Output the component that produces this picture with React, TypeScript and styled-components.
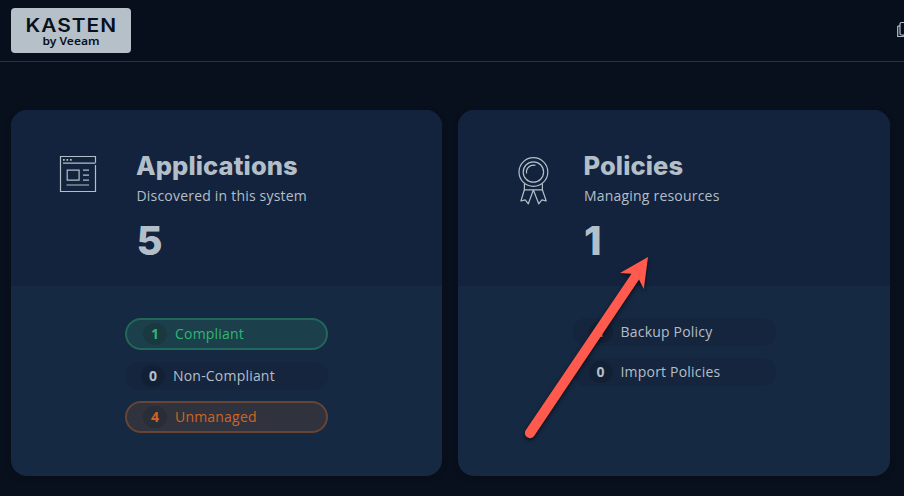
import React from "react";
import styled, { createGlobalStyle, css } from "styled-components";

const GlobalStyle = createGlobalStyle`
  * { box-sizing: border-box; }
  html, body { margin: 0; background: #09101d; overflow: hidden; }
  body { font-family: "Open Sans", "Noto Sans", sans-serif; color: #b3bfc8; }
`;

const Page = styled.div`
  position: relative;
  width: 904px;
  height: 496px;
  overflow: hidden;
  background: #09101d;
`;

const Header = styled.header`
  display: flex;
  justify-content: space-between;
  height: 62px;
  padding: 8px 0 0 11px;
  border-bottom: 1px solid #24354a;
  background: #070f1c;
`;

const Logo = styled.svg`
  display: block;
  width: 120px;
  height: 45px;
  border-radius: 4px;
  background: #b5c0c9;
`;

const DocsIcon = styled.svg`
  width: 8px;
  height: 18px;
  margin-top: 13px;
`;

const Cards = styled.main`
  display: grid;
  grid-template-columns: 431px 432px;
  column-gap: 16px;
  padding: 48px 0 0 11px;
`;

const Card = styled.section`
  height: 365.5px;
  border-radius: 16px;
  overflow: hidden;
  background: #162942;
  box-shadow: 0 2px 6px rgba(0, 0, 0, 0.2);
`;

const Summary = styled.div<{ $inset: number }>`
  display: flex;
  height: 176px;
  padding-left: ${(p) => p.$inset}px;
  background: #14233d;
`;

const IconSlot = styled.div<{ $width: number }>`
  width: ${(p) => p.$width}px;
  padding-top: 45px;
  flex: none;
  svg { display: block; }
`;

const Details = styled.div`
  padding-top: 39px;
`;

const Title = styled.h2`
  margin: 0 0 0 -0.5px;
  font: 800 25.5px/34px Inter, sans-serif;
  letter-spacing: 0.1px;
  white-space: nowrap;
`;

const Subtitle = styled.p`
  margin: 3px 0 0;
  font-size: 14px;
  line-height: 20px;
  letter-spacing: 0.2px;
`;

const Total = styled.div`
  margin: 11px 0 0;
  font: 800 40px/48px Inter, sans-serif;
`;

const StatusList = styled.div<{ $inset: number }>`
  display: flex;
  flex-direction: column;
  gap: 11.6px;
  width: 203px;
  margin: 32px 0 0 ${(p) => p.$inset}px;
`;

type Tone = "neutral" | "good" | "warn";

const tones = {
  neutral: css`
    height: 28px;
    background: #15253e;
  `,
  good: css`
    height: 32px;
    color: #2fb673;
    border: 2px solid #23665a;
    background: #1b404b;
  `,
  warn: css`
    height: 32px;
    color: #d0651f;
    border: 2px solid #674433;
    background: #30323e;
  `,
};

const Pill = styled.div<{ $tone: Tone }>`
  display: flex;
  align-items: center;
  gap: 8px;
  padding-left: 16px;
  border-radius: 16px;
  font-size: 14px;
  line-height: 20px;
  letter-spacing: 0.2px;
  white-space: nowrap;
  ${(p) => tones[p.$tone]}
`;

const countColors = { neutral: "#122036", good: "#193840", warn: "#292d38" };

const Count = styled.span<{ $tone: Tone }>`
  display: flex;
  align-items: center;
  justify-content: center;
  width: 24px;
  height: 22px;
  border-radius: 50%;
  font-weight: 700;
  letter-spacing: 0;
  background: ${(p) => countColors[p.$tone]};
`;

const Pointer = styled.svg`
  position: absolute;
  left: 510px;
  top: 240px;
  filter: drop-shadow(0 2px 2px rgba(0, 0, 0, 0.6));
`;

function Status({ count, label, tone = "neutral" }: { count: number; label: string; tone?: Tone }) {
  return (
    <Pill $tone={tone}>
      <Count $tone={tone}>{count}</Count>
      {label}
    </Pill>
  );
}

function BrowserIcon() {
  return (
    <svg width="40" height="40" viewBox="0 0 40 40" fill="none" stroke="#b3bfc8" strokeWidth="1.2">
      <path d="M36.5 7.5V1.5H1.5v35h35V10M4 8.2h32.5" />
      <path d="M4 4.8h1.7M7.5 4.8h1.7M11 4.8h1.7" strokeWidth="1.7" />
      <path d="M8.2 15.2h11.9v10H8.2zM24 15.2h6M24 20.2h6M24 25.2h6M7.5 30h22.5" />
    </svg>
  );
}

function RibbonIcon() {
  return (
    <svg width="40" height="54" viewBox="0.6 0 40 54" fill="none" stroke="#b3bfc8" strokeWidth="1.2">
      <circle cx="20" cy="17" r="14.4" />
      <circle cx="20" cy="17" r="10.2" />
      <path d="M13.2 18.5A7 7 0 0 1 22 10.4" />
      <path d="M11 28.5v7M29 28.5v7M11 34.8h18" />
      <path d="M11 34.8 7.5 46l4.3-1.2 3.1 4L20 35M29 34.8 32.8 46l-4.3-1.2-3.2 4L20 35" strokeLinejoin="round" />
    </svg>
  );
}

export default function App() {
  return (
    <Page>
      <GlobalStyle />
      <Header>
        <Logo viewBox="0 0 120 45" fill="#07101d">
          <text transform="translate(14.5 23.5) scale(1.16 1)" fontFamily="Inter" fontSize="18" fontWeight="600" textLength="78" lengthAdjust="spacing">KASTEN</text>
          <text x="31.5" y="37" fontFamily="Noto Sans" fontSize="11" fontWeight="600" textLength="57" lengthAdjust="spacingAndGlyphs">by Veeam</text>
        </Logo>
        <DocsIcon viewBox="0 0 8 18" fill="none" stroke="#b3bfc8" strokeWidth="1.2">
          <path d="M8 1.5H5.5q-1.5 0-1.5 1.5v9.5q0 1.5 1.5 1.5H8M4 4.5 1.7 5.5v10h5.5V14" />
        </DocsIcon>
      </Header>
      <Cards>
        <Card>
          <Summary $inset={48}>
            <IconSlot $width={77.5}><BrowserIcon /></IconSlot>
            <Details>
              <Title>Applications</Title>
              <Subtitle>Discovered in this system</Subtitle>
              <Total>5</Total>
            </Details>
          </Summary>
          <StatusList $inset={114}>
            <Status count={1} label="Compliant" tone="good" />
            <Status count={0} label="Non-Compliant" />
            <Status count={4} label="Unmanaged" tone="warn" />
          </StatusList>
        </Card>
        <Card>
          <Summary $inset={56}>
            <IconSlot $width={70}><RibbonIcon /></IconSlot>
            <Details>
              <Title>Policies</Title>
              <Subtitle>Managing resources</Subtitle>
              <Total>1</Total>
            </Details>
          </Summary>
          <StatusList $inset={114.5}>
            <Status count={1} label="Backup Policy" />
            <Status count={0} label="Import Policies" />
          </StatusList>
        </Card>
      </Cards>
      <Pointer width="150" height="210" viewBox="0 0 150 210" fill="#ff5a4d">
        <path d="M138 17 110 33 121.5 33.7 15.7 190.3A5 5 0 0 0 24.3 195.8L129 39.5 133.8 49Z" />
      </Pointer>
    </Page>
  );
}
